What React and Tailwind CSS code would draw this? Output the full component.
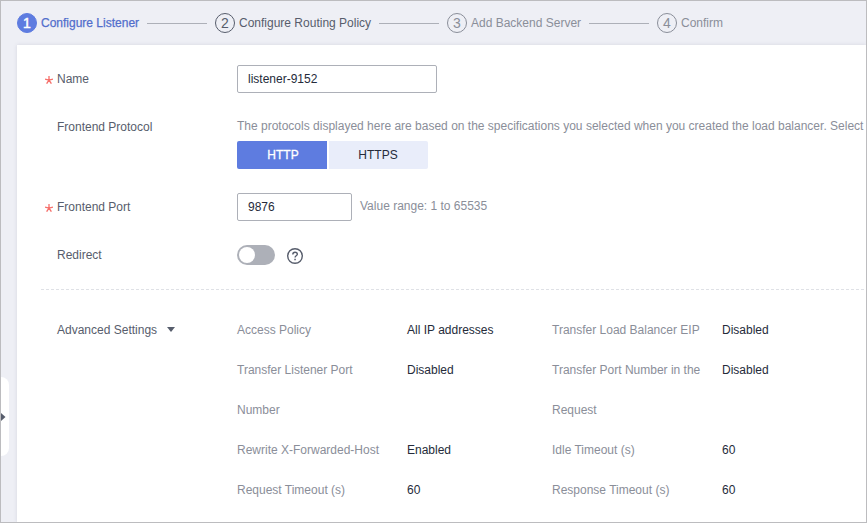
const STEPS = [
  { n: 1, label: "Configure Listener", width: "w-[98px]", circle: "bg-[#5e7ce0] border-[#5e7ce0] text-white [-webkit-text-stroke:0.5px_white]", text: "text-[#526ecc] [-webkit-text-stroke:0.25px_#526ecc]" },
  { n: 2, label: "Configure Routing Policy", width: "w-[132px]", circle: "border-[#575d6c] text-[#575d6c]", text: "text-[#575d6c]" },
  { n: 3, label: "Add Backend Server", width: "w-[110px]", circle: "border-[#8a8e99] text-[#8a8e99]", text: "text-[#8a8e99]" },
  { n: 4, label: "Confirm", width: "w-[42px]", circle: "border-[#8a8e99] text-[#8a8e99]", text: "text-[#8a8e99]" },
];

const SETTINGS = [
  ["Access Policy", "All IP addresses", "Transfer Load Balancer EIP", "Disabled"],
  ["Transfer Listener Port Number", "Disabled", "Transfer Port Number in the Request", "Disabled"],
  ["Rewrite X-Forwarded-Host", "Enabled", "Idle Timeout (s)", "60"],
  ["Request Timeout (s)", "60", "Response Timeout (s)", "60"],
];

function Stepper() {
  return (
    <header className="flex h-11 shrink-0 items-center pl-4">
      {STEPS.map((s, i) => (
        <div key={s.n} className="flex items-center">
          {i > 0 && <div className="mx-2 h-px w-[60px] bg-[#adb0b8]" />}
          <div className={`mr-1 flex size-5 items-center justify-center rounded-full border text-sm leading-none ${s.circle}`}>{s.n}</div>
          <div className={`${s.width} whitespace-nowrap ${s.text}`}>{s.label}</div>
        </div>
      ))}
    </header>
  );
}

function Label({ required, children }) {
  return (
    <div className="flex h-7 w-[196px] shrink-0 items-center text-[#575d6c]">
      <span className="flex w-4 pl-1">
        {required && (
          <svg width="8" height="8" viewBox="0 0 8 8" className="mt-px" fill="none" stroke="#f66f6a" strokeWidth="1.3">
            <path d="M4 0v4M0 3.2 4 4.2 8 3.2M4 4.2 1.6 7.7M4 4.2l2.4 3.5" />
          </svg>
        )}
      </span>
      {children}
    </div>
  );
}

export default function App() {
  return (
    <div className="relative flex h-[523px] w-[867px] flex-col overflow-hidden border border-[#bcbcbf] bg-[#eeeff5] text-xs leading-4 text-[#252b3a] [font-family:'Liberation_Sans',Arial,sans-serif]">
      <Stepper />
      <main className="ml-4 flex-1 bg-white pl-6 shadow-[0_0_4px_rgba(60,60,90,0.13)]">
        <div className="flex pt-5">
          <Label required>Name</Label>
          <div className="flex h-7 w-[200px] items-center rounded-[2px] border border-[#adb0b8] px-2.5">listener-9152</div>
        </div>
        <div className="mt-5 flex">
          <Label>Frontend Protocol</Label>
          <div>
            <p className="mt-[5px] mb-[7px] whitespace-nowrap text-[#8a8e99]">
              The protocols displayed here are based on the specifications you selected when you created the load balancer. Select
            </p>
            <div className="flex gap-0.5">
              <div className="flex h-7 w-[90px] items-center justify-center rounded-l-[2px] bg-[#5e7ce0] pl-0.5 text-white [-webkit-text-stroke:0.3px_white]">HTTP</div>
              <div className="flex h-7 w-[99px] items-center justify-center rounded-r-[2px] bg-[#e9edfa] pr-px">HTTPS</div>
            </div>
          </div>
        </div>
        <div className="mt-6 flex">
          <Label required>Frontend Port</Label>
          <div className="flex h-7 w-[115px] items-center rounded-[2px] border border-[#adb0b8] px-2.5">9876</div>
          <span className="mt-[5px] ml-2 text-[#8a8e99]">Value range: 1 to 65535</span>
        </div>
        <div className="mt-5 flex">
          <Label>Redirect</Label>
          <div className="mt-1 flex h-5 w-[38px] items-center rounded-full bg-[#adb0b8] pl-0.5">
            <div className="size-4 rounded-full bg-white" />
          </div>
          <svg className="mt-[7px] ml-3" width="16" height="16" viewBox="0 0 16 16" fill="none" stroke="#575d6c" strokeWidth="1.4">
            <circle cx="8" cy="8" r="7.3" />
            <path d="M5.8 6.4C5.8 5 6.7 4.2 8 4.2s2.3.8 2.3 2c0 1.5-2.2 1.6-2.2 3.2" />
            <path d="M7.3 11.4h1.5" strokeWidth="1.5" />
          </svg>
        </div>
        <svg className="mt-5 block" width="824" height="1">
          <path d="M0 .5H824" stroke="#dfe1e6" strokeDasharray="3 2" />
        </svg>
        <div className="mt-5 flex">
          <div className="flex h-10 w-[196px] shrink-0 items-center pl-4 text-[#575d6c]">
            Advanced Settings
            <svg className="mb-px ml-2.5" width="8" height="5" viewBox="0 0 8 5" fill="#575d6c"><path d="M0 0h8L4 5z" /></svg>
          </div>
          <div className="grid grid-cols-[170px_145px_170px_80px] leading-10">
            {SETTINGS.flatMap((row, r) =>
              row.map((cell, c) => (
                <div key={`${r}-${c}`} className={c % 2 ? "" : "pr-5 text-[#8a8e99]"}>{cell}</div>
              ))
            )}
          </div>
        </div>
      </main>
      <div className="absolute top-[376px] left-0 flex h-[79px] w-2 items-center rounded-r-lg bg-white">
        <svg width="5" height="8" viewBox="0 0 5 8" fill="#575d6c"><path d="M0 0v8l4.5-4z" /></svg>
      </div>
    </div>
  );
}
